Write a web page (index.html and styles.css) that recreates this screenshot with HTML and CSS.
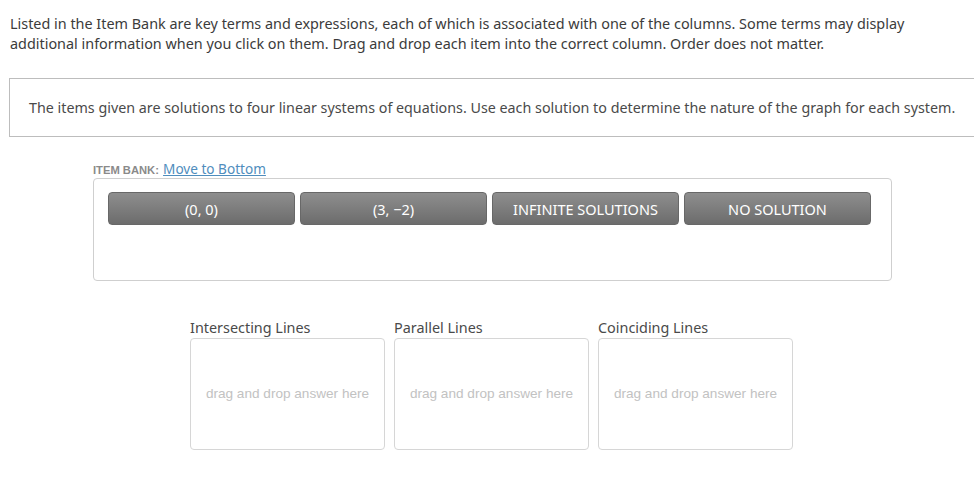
FILE: index.html
```html
<!DOCTYPE html>
<html>
<head>
<meta charset="utf-8">
<link rel="stylesheet" href="styles.css">
</head>
<body>
<p class="intro">Listed in the Item Bank are key terms and expressions, each of which is associated with one of the columns. Some terms may display additional information when you click on them. Drag and drop each item into the correct column. Order does not matter.</p>
<div class="prompt">The items given are solutions to four linear systems of equations. Use each solution to determine the nature of the graph for each system.</div>
<div class="bank-wrap">
  <div class="bank-head"><span class="bank-label">ITEM BANK:</span> <a class="bank-link" href="#">Move to Bottom</a></div>
  <div class="bank">
    <div class="item">(0, 0)</div>
    <div class="item">(3, −2)</div>
    <div class="item">INFINITE SOLUTIONS</div>
    <div class="item">NO SOLUTION</div>
  </div>
  <div class="columns">
    <div class="col">
      <div class="col-title">Intersecting Lines</div>
      <div class="drop">drag and drop answer here</div>
    </div>
    <div class="col">
      <div class="col-title">Parallel Lines</div>
      <div class="drop">drag and drop answer here</div>
    </div>
    <div class="col">
      <div class="col-title">Coinciding Lines</div>
      <div class="drop">drag and drop answer here</div>
    </div>
  </div>
</div>
</body>
</html>
```
FILE: styles.css
```css
html, body {
  margin: 0;
  padding: 0;
  background: #fff;
  overflow: hidden;
}
body {
  font-family: "Noto Sans", "Open Sans", sans-serif;
  color: #3b3b3b;
  width: 974px;
}
.intro {
  margin: 0;
  padding: 14px 40px 0 10px;
  font-size: 14.4px;
  line-height: 20px;
}
.prompt {
  margin: 24px -30px 0 9px;
  border: 1px solid #bdbdbd;
  height: 59px;
  box-sizing: border-box;
  padding: 20px 0 0 19px;
  font-size: 14.3px;
  line-height: 18px;
  color: #4a4a4a;
}
.bank-wrap {
  margin: 22px 0 0 93px;
  width: 799px;
}
.bank-head {
  height: 19px;
  line-height: 18px;
}
.bank-label {
  font-family: "Liberation Sans", Arial, sans-serif;
  font-weight: bold;
  font-size: 11.2px;
  color: #8a8a8a;
}
.bank-link {
  font-size: 13.6px;
  color: #4f8dbd;
  text-decoration: underline;
}
.bank {
  border: 1px solid #cfcfcf;
  border-radius: 4px;
  height: 103px;
  box-sizing: border-box;
  padding: 13px 14px;
  display: flex;
  gap: 5px;
  align-items: flex-start;
}
.item {
  width: 187px;
  height: 33px;
  box-sizing: border-box;
  border-radius: 4px;
  background: linear-gradient(#8e8e8e, #6c6c6c);
  border: 1px solid #686868;
  color: #fff;
  font-size: 14.5px;
  display: flex;
  align-items: center;
  justify-content: center;
}
.columns {
  display: flex;
  gap: 9px;
  margin-top: 37px;
  padding-left: 97px;
}
.col {
  width: 195px;
}
.col-title {
  font-size: 14.4px;
  line-height: 20px;
  color: #4a4a4a;
}
.drop {
  height: 112px;
  box-sizing: border-box;
  border: 1px solid #d6d6d6;
  border-radius: 4px;
  display: flex;
  align-items: center;
  justify-content: center;
  padding-bottom: 2px;
  font-family: "Liberation Sans", Arial, sans-serif;
  font-size: 13.6px;
  color: #c2c2c2;
}
```
